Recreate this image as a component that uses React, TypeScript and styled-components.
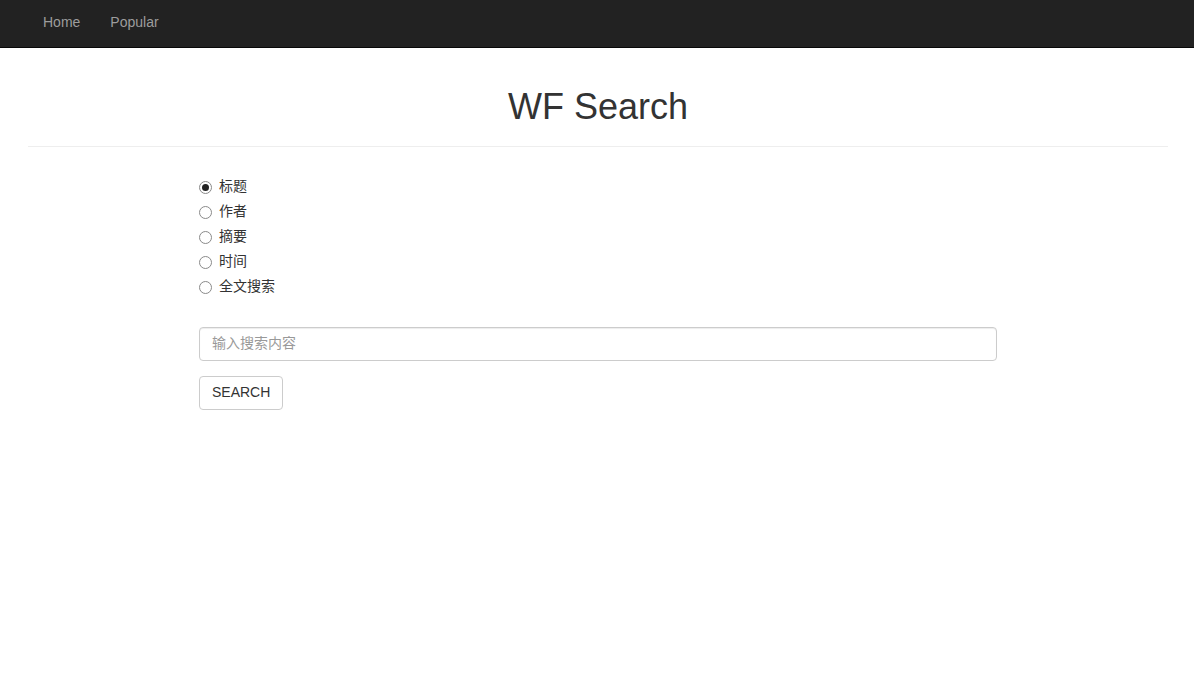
import React, { useState } from "react";
import styled, { createGlobalStyle } from "styled-components";

const Global = createGlobalStyle`
  * { box-sizing: border-box; }
  html, body { margin: 0; padding: 0; background: #fff; }
  body {
    font-family: "Liberation Sans", Arial, "Noto Sans CJK SC", sans-serif;
    font-size: 14px;
    line-height: 1.42857;
    color: #333;
  }
`;

const NavBar = styled.nav`
  height: 48px;
  background: #222;
  border-bottom: 1px solid #080808;
  display: flex;
  align-items: center;
  padding-left: 28px;
`;

const NavLink = styled.a`
  color: #9d9d9d;
  text-decoration: none;
  padding: 0 15px;
  font-size: 14px;
  line-height: 20px;
  margin-top: -3px;
`;

const Container = styled.main`
  padding: 0 26px 0 28px;
`;

const Header = styled.header`
  padding: 39px 0 19px;
  border-bottom: 1px solid #eee;
  text-align: center;
`;

const Title = styled.h1`
  margin: 0;
  font-size: 36px;
  font-weight: 500;
  line-height: 1.1;
  color: #333;
`;

const Form = styled.form`
  margin-left: 171px;
  width: 798px;
  padding-top: 28px;
  display: flex;
  flex-direction: column;
`;

const RadioGroup = styled.div`
  display: flex;
  flex-direction: column;
  margin-bottom: 27px;
`;

const RadioRow = styled.label`
  display: flex;
  align-items: center;
  height: 25px;
  gap: 7px;
  cursor: pointer;
  font-family: "Liberation Sans", "Noto Sans CJK SC", sans-serif;
  font-size: 14px;
  color: #333;
`;

const Radio = styled.input`
  appearance: none;
  margin: 0;
  width: 13px;
  height: 13px;
  border: 1px solid #8a8a8a;
  border-radius: 50%;
  background: #fff;
  display: grid;
  place-items: center;
  &:checked::after {
    content: "";
    width: 7px;
    height: 7px;
    border-radius: 50%;
    background: #222;
  }
`;

const SearchInput = styled.input`
  height: 34px;
  width: 100%;
  padding: 5px 12px 7px;
  border: 1px solid #ccc;
  border-radius: 4px;
  font-family: "Liberation Sans", "Noto Sans CJK SC", sans-serif;
  font-size: 14px;
  color: #555;
  box-shadow: inset 0 1px 1px rgba(0, 0, 0, 0.075);
  outline: none;
  &::placeholder { color: #999; }
`;

const Button = styled.button`
  align-self: flex-start;
  margin-top: 15px;
  height: 34px;
  padding: 5px 12px 7px;
  background: #fff;
  border: 1px solid #ccc;
  border-radius: 4px;
  font-family: "Liberation Sans", Arial, sans-serif;
  font-size: 14px;
  color: #333;
  cursor: pointer;
`;

const options = ["标题", "作者", "摘要", "时间", "全文搜索"];

export default function App() {
  const [sel, setSel] = useState(0);
  return (
    <>
      <Global />
      <NavBar>
        <NavLink href="#">Home</NavLink>
        <NavLink href="#">Popular</NavLink>
      </NavBar>
      <Container>
        <Header>
          <Title>WF Search</Title>
        </Header>
        <Form onSubmit={(e) => e.preventDefault()}>
          <RadioGroup>
            {options.map((o, i) => (
              <RadioRow key={o}>
                <Radio
                  type="radio"
                  name="field"
                  checked={sel === i}
                  onChange={() => setSel(i)}
                />
                {o}
              </RadioRow>
            ))}
          </RadioGroup>
          <SearchInput placeholder="输入搜索内容" />
          <Button type="submit">SEARCH</Button>
        </Form>
      </Container>
    </>
  );
}
